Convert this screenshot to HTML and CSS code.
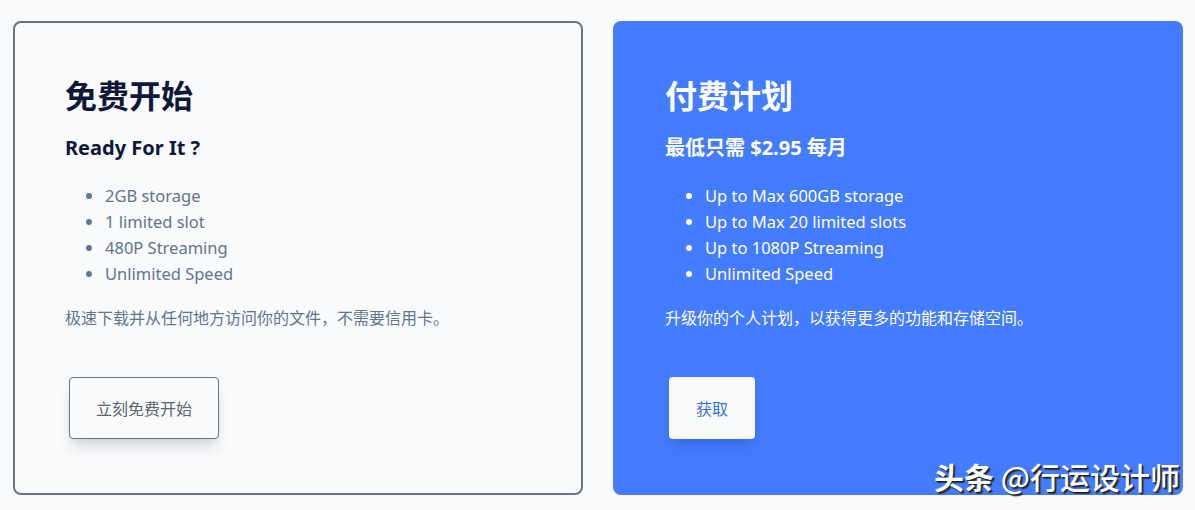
FILE: index.html
```html
<!DOCTYPE html>
<html lang="zh">
<head>
<meta charset="utf-8">
<title>Pricing</title>
<link rel="stylesheet" href="styles.css">
</head>
<body>
<main class="plans">
  <section class="card card-free">
    <h2 class="title">免费开始</h2>
    <h3 class="subtitle">Ready For It ?</h3>
    <ul class="features">
      <li>2GB storage</li>
      <li>1 limited slot</li>
      <li>480P Streaming</li>
      <li>Unlimited Speed</li>
    </ul>
    <p class="desc">极速下载并从任何地方访问你的文件，不需要信用卡。</p>
    <div class="actions"><button class="btn btn-outline">立刻免费开始</button></div>
  </section>
  <section class="card card-paid">
    <h2 class="title">付费计划</h2>
    <h3 class="subtitle">最低只需 $2.95 每月</h3>
    <ul class="features">
      <li>Up to Max 600GB storage</li>
      <li>Up to Max 20 limited slots</li>
      <li>Up to 1080P Streaming</li>
      <li>Unlimited Speed</li>
    </ul>
    <p class="desc">升级你的个人计划，以获得更多的功能和存储空间。</p>
    <div class="actions"><button class="btn btn-light">获取</button></div>
  </section>
  <div class="watermark"><b>头条</b> @行运设计师</div>
</main>
</body>
</html>
```

FILE: styles.css
```css
* { box-sizing: border-box; }
html, body {
  margin: 0;
  padding: 0;
  background: #f9fafb;
  font-family: "Noto Sans", "Noto Sans CJK SC", sans-serif;
}
.plans {
  position: relative;
  display: grid;
  grid-template-columns: 570px 570px;
  gap: 30px;
  padding: 21px 12px 15px 13px;
  height: 510px;
}
.card {
  border-radius: 8px;
  padding: 51px 50px 0 50px;
  height: 474px;
}
.card-free {
  border: 2px solid #6b7280;
  background: #f9fafb;
  color: #64748b;
}
.card-paid {
  background: #437cff;
  color: #ffffff;
  padding-left: 52px;
  padding-top: 53px;
}
.title {
  margin: 0;
  font-size: 32px;
  line-height: 40px;
  font-weight: 700;
  color: #0f1838;
  font-family: "Noto Sans CJK SC", sans-serif;
}
.subtitle {
  margin: 20px 0 0;
  font-size: 20px;
  line-height: 28px;
  font-weight: 700;
  color: #0f1838;
}
.card-paid .title, .card-paid .subtitle { color: #ffffff; }
.features {
  margin: 21px 0 0;
  padding-left: 40px;
  font-size: 16.5px;
  line-height: 26px;
}
.desc {
  margin: 18px 0 0;
  font-size: 16px;
  line-height: 24px;
  font-family: "Noto Sans CJK SC", sans-serif;
}
.actions {
  margin-top: 48px;
  padding-left: 4px;
}
.btn {
  height: 62px;
  padding: 0;
  font-size: 16px;
  white-space: nowrap;
  font-family: "Noto Sans CJK SC", sans-serif;
  border-radius: 4px;
  box-shadow: 0 10px 15px -3px rgba(30, 41, 80, 0.15), 0 4px 6px -2px rgba(30, 41, 80, 0.08);
  cursor: pointer;
}
.btn-outline {
  width: 150px;
  background: #f9fafb;
  border: 1px solid #6b7280;
  color: #5b6472;
}
.btn-light {
  width: 86px;
  background: #f9fafb;
  border: none;
  color: #3b6fe0;
}
.watermark {
  position: absolute;
  right: 15px;
  bottom: 17px;
  font-size: 30px;
  line-height: 34px;
  color: #ffffff;
  font-family: "Noto Sans CJK SC", sans-serif;
  font-weight: 500;
  text-shadow: 1px 1px 0 #222, 2px 2px 1px #333;
}
.watermark b { font-weight: 700; }
```
